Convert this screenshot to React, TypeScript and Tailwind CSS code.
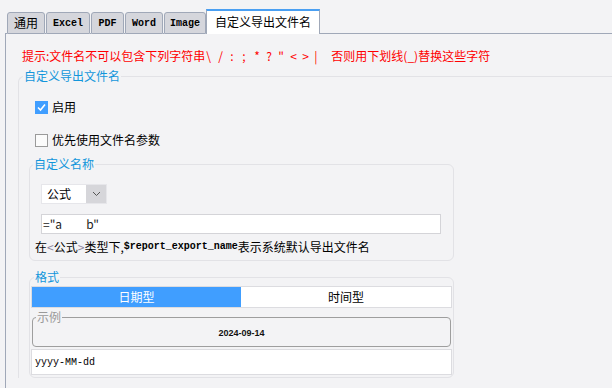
import React from "react";

function Tab({ label, w, mono }: { label: string; w: string; mono?: boolean }) {
  return (
    <div
      className={
        "h-[22px] border border-[#a0a8b8] rounded-t-[3px] bg-[#d5d6dc] flex items-center justify-center text-black " +
        w +
        (mono
          ? " font-['Liberation_Mono',monospace] font-bold text-[10px]"
          : " text-[12px]")
      }
    >
      {label}
    </div>
  );
}

function Line({ w }: { w: string }) {
  return <div className={"h-[1px] bg-[#a0a8b8] " + w} />;
}

export default function App() {
  const specials = ["\\", "/", ":", ";", "*", "?", "\"", "<", ">", "|"];
  return (
    <div className="w-[612px] h-[388px] overflow-hidden bg-[#f3f3f5] font-['Noto_Sans_CJK_SC',sans-serif] text-[12px] text-black">
      {/* tab strip */}
      <div className="ml-[5px] flex items-end h-[34px]">
        <Line w="w-[2px]" />
        <Tab label="通用" w="w-[38px]" />
        <Line w="w-[1px]" />
        <Tab label="Excel" w="w-[44px]" mono />
        <Line w="w-[1px]" />
        <Tab label="PDF" w="w-[33px]" mono />
        <Line w="w-[1px]" />
        <Tab label="Word" w="w-[38px]" mono />
        <Line w="w-[1px]" />
        <Tab label="Image" w="w-[42px]" mono />
        <div className="h-[25px] w-[114px] border-t-2 border-t-[#4a9ff2] border-x border-x-[#a0a8b8] bg-white flex items-center justify-center pb-[2px] text-[12px]">
          自定义导出文件名
        </div>
        <div className="flex-1 h-[1px] bg-[#a0a8b8]" />
      </div>

      {/* panel */}
      <div className="ml-[5px] border-l border-[#a0a8b8] h-[354px] pt-[14px]">
        <div className="ml-[16px] leading-[16px] text-[#ff0000] flex items-center whitespace-nowrap">
          <span>提示:文件名不可以包含下列字符串</span>
          {specials.map((c, i) => (
            <span key={i} className="inline-block w-[12px] pl-[1px]">
              {c}
            </span>
          ))}
          <span className="ml-[6px]">否则用下划线(_)替换这些字符</span>
        </div>

        <fieldset className="mt-[3px] ml-[12px] border border-[#e2e2e6] border-r-0 border-b-0 rounded-tl-[6px] p-0 m-0 min-w-0">
          <legend className="ml-[4px] px-[1px] leading-[18px] text-[#1296db]">自定义导出文件名</legend>

          <div className="mt-[13px] pl-[16px] h-[18px] flex items-center gap-[4px]">
            <div className="w-[13px] h-[13px] bg-[#409eff] flex items-center justify-center">
              <svg width="11" height="11" viewBox="0 0 11 11">
                <polyline points="2,5.5 4.5,8 9,2.5" fill="none" stroke="white" strokeWidth="1.6" />
              </svg>
            </div>
            <span className="leading-[18px]">启用</span>
          </div>

          <div className="mt-[15px] pl-[16px] h-[18px] flex items-center gap-[4px]">
            <div className="w-[13px] h-[13px] border border-[#9a9a9a] bg-[#fbfbfb]" />
            <span className="leading-[18px]">优先使用文件名参数</span>
          </div>

          {/* 自定义名称 */}
          <fieldset className="mt-[6px] ml-[10px] w-[425px] border border-[#e2e2e6] rounded-[6px] p-0 m-0 min-w-0">
            <legend className="ml-[3px] px-[1px] leading-[18px] text-[#1296db]">自定义名称</legend>
            <div className="pl-[11px]">
              <div className="mt-[11px] w-[66px] h-[20px] flex border border-[#e6e6ea] bg-white">
                <div className="flex-1 pl-[5px] leading-[18px]">公式</div>
                <div className="w-[20px] bg-[#d6d6da] flex items-center justify-center">
                  <svg width="9" height="6" viewBox="0 0 9 6">
                    <polyline points="1,1 4.5,4.5 8,1" fill="none" stroke="#555" strokeWidth="1" />
                  </svg>
                </div>
              </div>
              <div className="mt-[10px] w-[400px] h-[20px] border border-[#d4d4d8] bg-white pl-[1px] leading-[18px] whitespace-pre text-[#222]">
                {'="a         b"'}
              </div>
            </div>
            <div className="mt-[4px] pl-[5px] pb-[4px] leading-[18px] flex items-center whitespace-nowrap">
              <span>在</span>
              <span className="text-[#8e86a0]">&lt;</span>
              <span>公式</span>
              <span className="text-[#8e86a0]">&gt;</span>
              <span>类型下,</span>
              <span className="font-['Liberation_Mono',monospace] font-bold text-[10px]">$report_export_name</span>
              <span>表示系统默认导出文件名</span>
            </div>
          </fieldset>

          {/* 格式 */}
          <fieldset className="mt-[7px] ml-[10px] w-[425px] border border-[#e2e2e6] rounded-[6px] px-[1px] pb-[2px] pt-0 m-0 min-w-0">
            <legend className="ml-[3px] px-[1px] leading-[18px] text-[#1296db]">格式</legend>
            <div className="h-[22px] border border-[#dcdce0] flex">
              <div className="w-[209px] bg-[#409eff] text-white flex items-center justify-center">日期型</div>
              <div className="flex-1 bg-white flex items-center justify-center">时间型</div>
            </div>
            <fieldset className="mx-[1px] border border-[#9e9e9e] rounded-[4px] p-0 m-0 min-w-0">
              <legend className="ml-[3px] px-[1px] leading-[18px] text-[#9a9a9a]">示例</legend>
              <div className="h-[20px] flex justify-center pt-[1px]">
                <span className="font-['Liberation_Sans',sans-serif] font-bold text-[9px] leading-[12px] text-[#111]">
                  2024-09-14
                </span>
              </div>
            </fieldset>
            <div className="mt-[2px] h-[26px] border border-[#dcdce0] bg-white pl-[3px] flex items-center font-['Liberation_Mono',monospace] text-[10px]">
              yyyy-MM-dd
            </div>
          </fieldset>
        </fieldset>
      </div>
    </div>
  );
}
